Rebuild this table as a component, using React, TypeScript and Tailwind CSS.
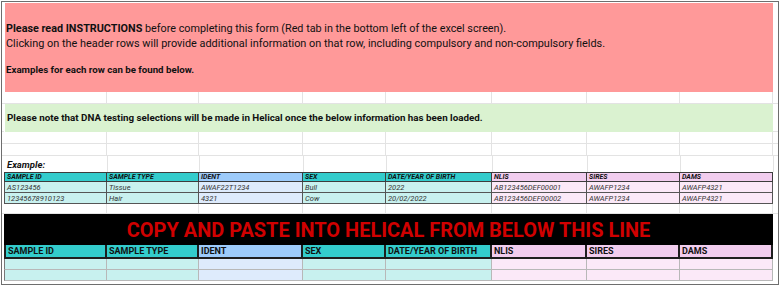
import React from "react";

const COLS =
  "grid grid-cols-[2px_103px_92px_104px_83px_106px_95px_93px_93px_1fr]";

const HEADS = [
  "SAMPLE ID",
  "SAMPLE TYPE",
  "IDENT",
  "SEX",
  "DATE/YEAR OF BIRTH",
  "NLIS",
  "SIRES",
  "DAMS",
];

const HEAD_BG = [
  "bg-[#33CCCC]",
  "bg-[#33CCCC]",
  "bg-[#9DCBFA]",
  "bg-[#33CCCC]",
  "bg-[#33CCCC]",
  "bg-[#F1CDEE]",
  "bg-[#F1CDEE]",
  "bg-[#F1CDEE]",
];

const DATA_BG = [
  "bg-[#C8F1EF]",
  "bg-[#C8F1EF]",
  "bg-[#DEEBFC]",
  "bg-[#C8F1EF]",
  "bg-[#C8F1EF]",
  "bg-[#FBE9F8]",
  "bg-[#FBE9F8]",
  "bg-[#FBE9F8]",
];

const ROWS = [
  [
    "AS123456",
    "Tissue",
    "AWAF22T1234",
    "Bull",
    "2022",
    "AB123456DEF00001",
    "AWAFP1234",
    "AWAFP4321",
  ],
  [
    "12345678910123",
    "Hair",
    "4321",
    "Cow",
    "20/02/2022",
    "AB123456DEF00002",
    "AWAFP1234",
    "AWAFP4321",
  ],
];

function Blank({ h }: { h: string }) {
  return (
    <div className={`${COLS} ${h}`}>
      <div className="border-b border-[#e3e3e3]" />
      {HEADS.map((k) => (
        <div key={k} className="border-r border-b border-[#e3e3e3]" />
      ))}
      <div className="border-b border-[#e3e3e3]" />
    </div>
  );
}

export default function App() {
  return (
    <div
      className="w-[781px] h-[286px] bg-white overflow-hidden text-[#111]"
      style={{ fontFamily: "Roboto, 'Liberation Sans', sans-serif" }}
    >
      <div className="ml-[1px] mt-[1px] w-[778px] h-[284px] border border-[#6e6e6e] flex flex-col">
        {/* spacer */}
        <div className="h-[1px]" />
        {/* red instructions block */}
        <div className={`${COLS} h-[89px]`}>
          <div />
          <div className="col-span-8 ml-[1px] bg-[#FF9999] pt-[18px] pl-[1px]">
            <p className="text-[10.8px] leading-[15px] whitespace-nowrap">
              <span className="font-bold">Please read INSTRUCTIONS</span> before
              completing this form (Red tab in the bottom left of the excel
              screen).
            </p>
            <p className="text-[10.9px] leading-[15px] whitespace-nowrap">
              Clicking on the header rows will provide additional information on
              that row, including compulsory and non-compulsory fields.
            </p>
            <p className="mt-[12px] text-[9.7px] leading-[14px] font-bold whitespace-nowrap">
              Examples for each row can be found below.
            </p>
          </div>
          <div />
        </div>
        <Blank h="h-[12px]" />
        {/* green note */}
        <div className={`${COLS} h-[28px]`}>
          <div className="border-b border-[#e3e3e3]" />
          <div className="col-span-8 ml-[1px] bg-[#DAF2D0] flex items-center pl-[2px]">
            <p className="text-[9.8px] font-bold whitespace-nowrap">
              Please note that DNA testing selections will be made in Helical
              once the below information has been loaded.
            </p>
          </div>
          <div className="border-b border-[#e3e3e3]" />
        </div>
        <Blank h="h-[12px]" />
        <Blank h="h-[12px]" />
        {/* Example label row */}
        <div className={`${COLS} h-[16px]`}>
          <div />
          <div className="flex items-end pl-[3px] pb-[1px]">
            <span className="text-[9.5px] leading-[12px] font-bold italic">
              Example:
            </span>
          </div>
          {HEADS.slice(1).map((k) => (
            <div key={k} className="border-l border-[#e3e3e3]" />
          ))}
          <div className="border-l border-[#e3e3e3]" />
        </div>
        {/* example header */}
        <div className={`${COLS} h-[10px]`}>
          <div />
          {HEADS.map((k, i) => (
            <div
              key={k}
              className={`${HEAD_BG[i]} border-t border-r border-b border-[#3c3c3c] ${
                i === 0 ? "border-l" : ""
              } pl-[2px] flex items-center overflow-hidden`}
            >
              <span className="text-[7px] leading-[8px] font-bold italic whitespace-nowrap">
                {k}
              </span>
            </div>
          ))}
          <div />
        </div>
        {ROWS.map((r, ri) => (
          <div key={ri} className={`${COLS} h-[11px]`}>
            <div />
            {r.map((v, i) => (
              <div
                key={i}
                className={`${DATA_BG[i]} border-r border-b border-[#555] ${
                  i === 0 ? "border-l" : ""
                } pl-[2px] flex items-center overflow-hidden`}
              >
                <span className="text-[7.5px] leading-[9px] italic text-[#333] whitespace-nowrap">
                  {v}
                </span>
              </div>
            ))}
            <div />
          </div>
        ))}
        <Blank h="h-[10px]" />
        {/* black banner */}
        <div className={`${COLS} h-[31px]`}>
          <div />
          <div className="col-span-8 bg-black flex items-center justify-center">
            <span className="inline-block scale-x-[0.95] text-[21px] leading-[24px] font-bold text-[#D00000] whitespace-nowrap">
              COPY AND PASTE INTO HELICAL FROM BELOW THIS LINE
            </span>
          </div>
          <div />
        </div>
        {/* bottom header */}
        <div className={`${COLS} h-[14px]`}>
          <div />
          {HEADS.map((k, i) => (
            <div
              key={k}
              className={`${HEAD_BG[i]} border-r-2 border-b-2 border-[#1e1e1e] ${
                i === 0 ? "border-l-2" : ""
              } pl-[2px] flex items-center overflow-hidden`}
            >
              <span className="text-[9px] leading-[10px] font-bold whitespace-nowrap">
                {k}
              </span>
            </div>
          ))}
          <div />
        </div>
        {[0, 1].map((ri) => (
          <div key={ri} className={`${COLS} h-[11px]`}>
            <div />
            {HEADS.map((k, i) => (
              <div
                key={k}
                className={`${DATA_BG[i]} border-r border-b border-[#b8b8b8] ${
                  i === 0 ? "border-l border-l-[#777]" : ""
                }`}
              />
            ))}
            <div />
          </div>
        ))}
        <div className="flex-1" />
      </div>
    </div>
  );
}
